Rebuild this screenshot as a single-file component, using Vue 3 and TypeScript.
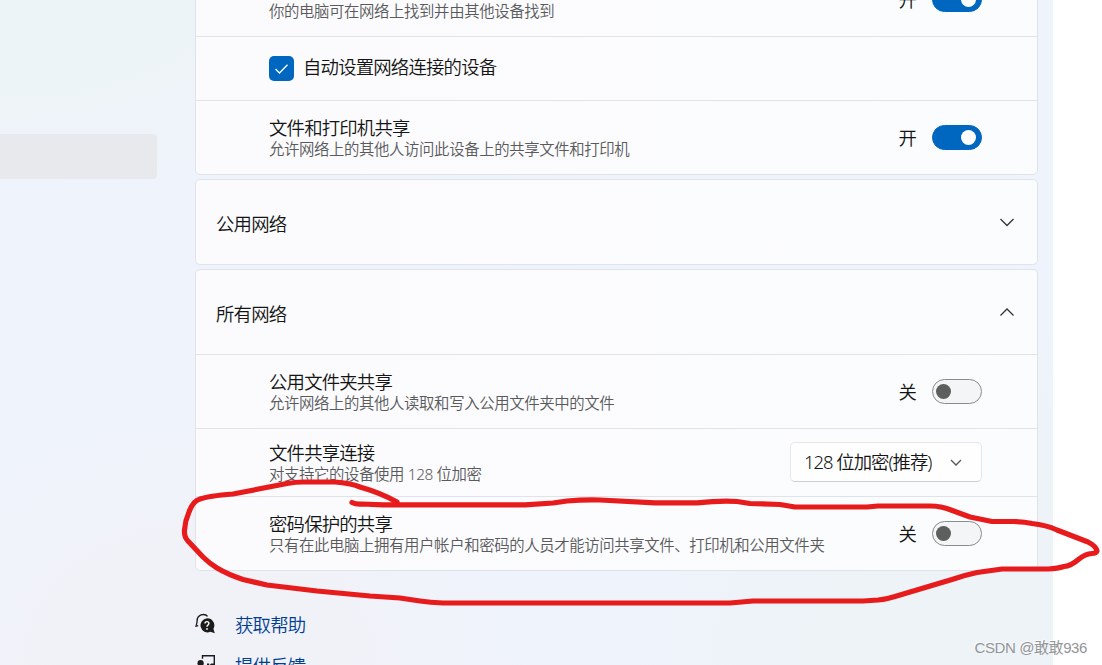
<script setup lang="ts">
interface Setting {
  title: string
  note?: string
  kind: 'toggle' | 'check' | 'select'
  on?: boolean
  value?: string
}

const profileRows: Setting[] = [
  { title: '', note: '你的电脑可在网络上找到并由其他设备找到', kind: 'toggle', on: true },
  { title: '自动设置网络连接的设备', kind: 'check' },
  { title: '文件和打印机共享', note: '允许网络上的其他人访问此设备上的共享文件和打印机', kind: 'toggle', on: true },
]

const allNetworkRows: Setting[] = [
  { title: '公用文件夹共享', note: '允许网络上的其他人读取和写入公用文件夹中的文件', kind: 'toggle', on: false },
  { title: '文件共享连接', note: '对支持它的设备使用 128 位加密', kind: 'select', value: '128 位加密(推荐)' },
  { title: '密码保护的共享', note: '只有在此电脑上拥有用户帐户和密码的人员才能访问共享文件、打印机和公用文件夹', kind: 'toggle', on: false },
]

const groups = [
  { name: '', rows: profileRows, open: true },
  { name: '公用网络', rows: [] as Setting[], open: false },
  { name: '所有网络', rows: allNetworkRows, open: true },
]
</script>

<template>
  <div class="screen">
    <div class="window">
      <aside class="sidebar"><div class="nav-item"></div></aside>
      <main class="main">
        <section v-for="(g, i) in groups" :key="i" class="card">
          <header v-if="g.name" class="head">
            <span class="head-name">{{ g.name }}</span>
            <svg class="chev" width="16" height="9" viewBox="0 0 16 9">
              <path :d="g.open ? 'M1.5 7.5 L8 1 L14.5 7.5' : 'M1.5 1 L8 7.5 L14.5 1'" />
            </svg>
          </header>
          <div v-for="r in g.rows" :key="r.title" class="row" :class="r.kind">
            <span v-if="r.kind === 'check'" class="checkbox">
              <svg width="25" height="25" viewBox="0 0 25 25"><path d="M6.5 13 L10.5 17 L18.5 8.8" /></svg>
            </span>
            <div class="text">
              <div class="title">{{ r.title }}</div>
              <div v-if="r.note" class="note">{{ r.note }}</div>
            </div>
            <template v-if="r.kind === 'toggle'">
              <span class="state">{{ r.on ? '开' : '关' }}</span>
              <span class="switch" :class="{ on: r.on }"><i></i></span>
            </template>
            <div v-if="r.kind === 'select'" class="dropdown">
              <span class="value">{{ r.value }}</span>
              <svg width="12" height="7" viewBox="0 0 12 7"><path d="M1 1 L6 6 L11 1" /></svg>
            </div>
          </div>
        </section>
        <nav class="links">
          <a class="link">
            <svg width="22" height="22" viewBox="0 0 22 22">
              <path d="M1.2 12.6 L2 9.2 C1.4 4.8 4.2 1.6 8 1.5 C10 1.4 11.6 2.1 12.6 3.4" fill="none" stroke="#1b1b1b" stroke-width="1.3" />
              <path d="M.2 13.4 L3.2 12.6" fill="none" stroke="#1b1b1b" stroke-width="1.3" />
              <path d="M12 5.2 A7.1 7.1 0 1 0 15.4 18.8 L19.8 20.3 L18.4 15.8 A7.1 7.1 0 0 0 12 5.2 Z" fill="#1b1b1b" />
              <path d="M10 10.6 C10 7.9 13.9 8 13.9 10.5 C13.9 12 12 12.1 12 13.8" fill="none" stroke="#fff" stroke-width="1.4" />
              <circle cx="12" cy="15.9" r=".9" fill="#fff" />
            </svg>
            <span>获取帮助</span>
          </a>
          <a class="link">
            <svg width="22" height="22" viewBox="0 0 22 22">
              <path d="M7.5 4.8 V1.7 H19.3 V10.3 H16.5 L13.5 13 V10.3 H12" fill="none" stroke="#1b1b1b" stroke-width="1.4" />
              <circle cx="5.6" cy="9.2" r="3.1" fill="#1b1b1b" />
              <path d="M1 14 H11 V17 Q6 22 1 17 Z" fill="#1b1b1b" />
            </svg>
            <span>提供反馈</span>
          </a>
        </nav>
      </main>
    </div>
    <svg class="ink" width="1102" height="665" viewBox="0 0 1102 665">
      <path d="M352 502.5 Q356 504.5 362 504 L383 504.8 H525 L553 503 L567 501 Q584 499.5 600 500 L655 502.8 H697 Q720 500.5 737 501.5 L750 503.5 L780 504.5 L795 507 H867 L878 506 H930 Q941 506 951 510 L970 517 L992 521.5 H1013 Q1024 521.5 1032 523.5 Q1046 525 1057 530 L1088 542 Q1096 546 1097 551 Q1096 553.5 1092 553.5 Q1085 554 1079 559 Q1071 566 1064 566.5 Q1058 568.5 1048 569 H1002 L977 572.5 Q965 575 952 579.5 L900 595 Q888 599 878 600 L863 601 H753 L730 603 H443 Q430 602.5 420 601 L400 598 L370 596 L317 591 L267 585 L243 579.5 Q228 574.5 217 568 Q209 563 203 557 L188 541 Q184 537 184.5 530 Q185 521 189 512 Q193 501 200 499 Q208 496 233 494 L287 483.5 Q296 482 303 482 H335 Q350 483 360 487 Q381 493 397 502" />
    </svg>
    <div class="watermark">CSDN @敢敢936</div>
  </div>
</template>

<style>
body { margin: 0; background: #fff; }
</style>

<style scoped>
.screen {
  position: relative;
  width: 1102px;
  height: 665px;
  overflow: hidden;
  background: #fff;
  color: #141414;
  font-family: "Noto Sans", "Noto Sans CJK SC", sans-serif;
  font-weight: 350;
}
.window {
  display: flex;
  width: 1053px;
  height: 665px;
  overflow: hidden;
  background:
    radial-gradient(ellipse 420px 190px at 0 0, #edf4f7 45%, rgba(237, 244, 247, 0) 100%),
    radial-gradient(ellipse 420px 330px at 100% 100%, #edf3f7 50%, rgba(237, 243, 247, 0) 100%),
    radial-gradient(ellipse 330px 260px at 200px 665px, #f1f2f8 40%, rgba(241, 242, 248, 0) 100%),
    #eff3fb;
}
.sidebar { flex: 0 0 195px; padding-top: 134px; box-sizing: border-box; }
.nav-item { width: 157px; height: 45px; border-radius: 0 4px 4px 0; background: #e8e9ed; }
.main {
  display: flex;
  flex-direction: column;
  gap: 4px;
  width: 843px;
  margin-top: -39px;
}
.card {
  flex: none;
  box-sizing: border-box;
  border: 1px solid #e0e4ea;
  border-radius: 5px;
  background: linear-gradient(90deg, #fbfbfd, #fbfcfe);
}
.title, .head-name, .state, .value, .link span {
  font-size: 18.4px;
  letter-spacing: -.82px;
}
.head {
  display: flex;
  align-items: center;
  justify-content: space-between;
  height: 84px;
  padding: 0 22px 0 20px;
}
.head-name { line-height: 22px; padding-top: 3px; }
.chev { fill: none; stroke: #333; stroke-width: 1.25; }
.row {
  display: flex;
  align-items: center;
  box-sizing: border-box;
  height: 74px;
  padding: 0 55px 0 73px;
  border-top: 1px solid #e0e4ea;
}
.row.check { height: 64px; }
.row.select { height: 68px; }
.card:first-child .row:first-child { border-top-color: transparent; }
.text { flex: 1; padding-top: 3px; white-space: nowrap; }
.check .text { padding: 0 0 2px 9px; }
.title { height: 21px; line-height: 19px; }
.check .title { line-height: 20px; }
.note { font-size: 15.4px; letter-spacing: -.38px; line-height: 21px; color: #5a5a5c; }
.state { line-height: 22px; margin-right: 16px; padding-top: 1px; }
.switch {
  display: flex;
  align-items: center;
  box-sizing: border-box;
  width: 50px;
  height: 25px;
  padding: 0 3px;
  border: 1px solid #8a8b8c;
  border-radius: 13px;
  background: #f4f5f7;
}
.switch i { width: 15px; height: 15px; border-radius: 50%; background: #5d5e5e; }
.switch.on { justify-content: flex-end; padding-right: 5px; border-color: #0067c0; background: #0067c0; }
.switch.on i { background: #fff; }
.checkbox { width: 25px; height: 25px; border-radius: 5px; background: #0067c0; }
.checkbox svg { display: block; fill: none; stroke: #fff; stroke-width: 1.3; }
.dropdown {
  display: flex;
  align-items: center;
  justify-content: space-between;
  box-sizing: border-box;
  width: 192px;
  height: 40px;
  margin-bottom: 1px;
  padding: 0 19px 0 13px;
  border: 1px solid #e5e6e9;
  border-bottom-color: #ccced1;
  border-radius: 5px;
  background: #fefefe;
}
.dropdown .value { line-height: 24px; letter-spacing: -1px; white-space: nowrap; }
.dropdown svg { fill: none; stroke: #555; stroke-width: 1.3; }
.links { display: flex; flex-direction: column; gap: 17px; padding-top: 38px; }
.link { display: flex; gap: 18px; height: 24px; color: #003e92; line-height: 24px; }
.link svg { flex: none; }
.ink { position: absolute; left: 0; top: 0; fill: none; stroke: #e81b1c; stroke-width: 5.2; stroke-linecap: round; stroke-linejoin: round; }
.watermark {
  position: absolute;
  right: 15px;
  top: 637px;
  color: #939598;
  font: 400 15px/21px "Liberation Sans", "Noto Sans CJK SC", sans-serif;
  letter-spacing: -.4px;
  white-space: nowrap;
  text-shadow: -1px -1px 0 rgba(255, 255, 255, .8);
}
</style>
